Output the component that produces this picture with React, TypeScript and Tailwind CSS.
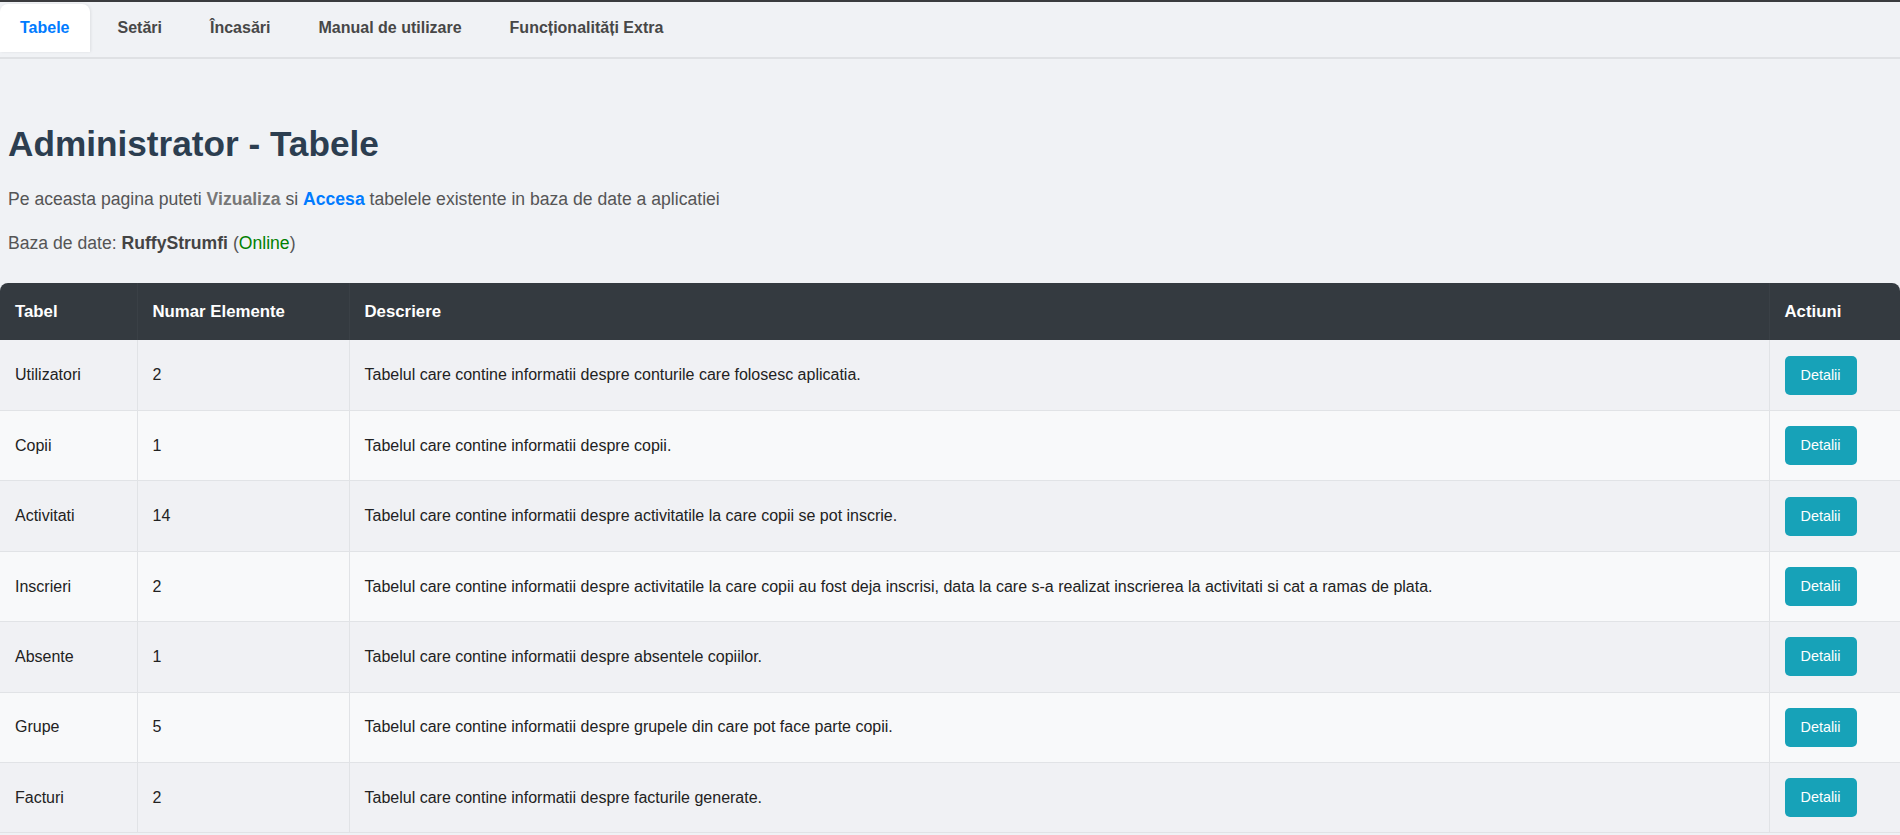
import { useState } from "react";

const TABS = ["Tabele", "Setări", "Încasări", "Manual de utilizare", "Funcționalități Extra"];

const ROWS: { name: string; count: number; desc: string }[] = [
  { name: "Utilizatori", count: 2, desc: "Tabelul care contine informatii despre conturile care folosesc aplicatia." },
  { name: "Copii", count: 1, desc: "Tabelul care contine informatii despre copii." },
  { name: "Activitati", count: 14, desc: "Tabelul care contine informatii despre activitatile la care copii se pot inscrie." },
  {
    name: "Inscrieri",
    count: 2,
    desc: "Tabelul care contine informatii despre activitatile la care copii au fost deja inscrisi, data la care s-a realizat inscrierea la activitati si cat a ramas de plata.",
  },
  { name: "Absente", count: 1, desc: "Tabelul care contine informatii despre absentele copiilor." },
  { name: "Grupe", count: 5, desc: "Tabelul care contine informatii despre grupele din care pot face parte copii." },
  { name: "Facturi", count: 2, desc: "Tabelul care contine informatii despre facturile generate." },
];

export default function App() {
  const [tab, setTab] = useState("Tabele");

  return (
    <div className="h-screen overflow-hidden bg-[#f0f2f5] font-['Liberation_Sans',Arial,sans-serif] text-[#333]">
      <div className="h-[2px] bg-[#3a3b3e]" />

      <nav className="flex gap-2 border-b-2 border-[#dfe1e4] pt-[2px] pb-[5px]">
        {TABS.map((t) => (
          <button
            key={t}
            onClick={() => setTab(t)}
            className={
              t === tab
                ? "h-12 rounded-t-lg bg-white px-5 text-[16px] font-bold text-[#007bff] shadow-[1px_0_3px_rgba(0,0,0,0.08)]"
                : "h-12 px-5 text-[16px] font-bold text-[#474747]"
            }
          >
            {t}
          </button>
        ))}
      </nav>

      <div className="px-2">
        <h1 className="mt-[64px] text-[35.2px] leading-[1.2] font-bold text-[#2c3e50]">Administrator - Tabele</h1>
        <p className="mt-[21px] text-[17.6px] leading-[1.5] text-[#555]">
          Pe aceasta pagina puteti <b className="text-[#777]">Vizualiza</b> si{" "}
          <b className="text-[#007bff]">Accesa</b> tabelele existente in baza de date a aplicatiei
        </p>
        <p className="mt-[17.6px] text-[17.6px] leading-[1.5] text-[#555]">
          Baza de date: <b className="text-[#444]">RuffyStrumfi</b> (<span className="text-[#008000]">Online</span>)
        </p>
      </div>

      <table className="mt-[26.6px] w-full table-fixed border-collapse text-[16px]">
        <colgroup>
          <col className="w-[137px]" />
          <col className="w-[212px]" />
          <col />
          <col className="w-[131px]" />
        </colgroup>
        <thead>
          <tr className="bg-[#343a40] text-left text-[16.8px] text-white">
            <th className="h-[57px] rounded-tl-lg border-r border-[#3a4046] px-[15px] font-bold">Tabel</th>
            <th className="border-r border-[#3a4046] px-[15px] font-bold">Numar Elemente</th>
            <th className="border-r border-[#3a4046] px-[15px] font-bold">Descriere</th>
            <th className="rounded-tr-lg px-[15px] font-bold">Actiuni</th>
          </tr>
        </thead>
        <tbody className="text-[#222]">
          {ROWS.map((r, i) => (
            <tr key={r.name} className={i % 2 === 0 ? "bg-[#f0f1f4]" : "bg-[#f8f9fa]"}>
              <td className="h-[70.4px] border-r border-b border-[#e1e3e6] px-[15px]">{r.name}</td>
              <td className="border-r border-b border-[#e1e3e6] px-[15px]">{r.count}</td>
              <td className="border-r border-b border-[#e1e3e6] px-[15px]">{r.desc}</td>
              <td className="border-b border-[#e1e3e6] px-[15px]">
                <button className="rounded-[5px] bg-[#17a2b8] px-4 py-[9px] text-[14.4px] leading-[21px] text-white">
                  Detalii
                </button>
              </td>
            </tr>
          ))}
        </tbody>
      </table>
    </div>
  );
}
